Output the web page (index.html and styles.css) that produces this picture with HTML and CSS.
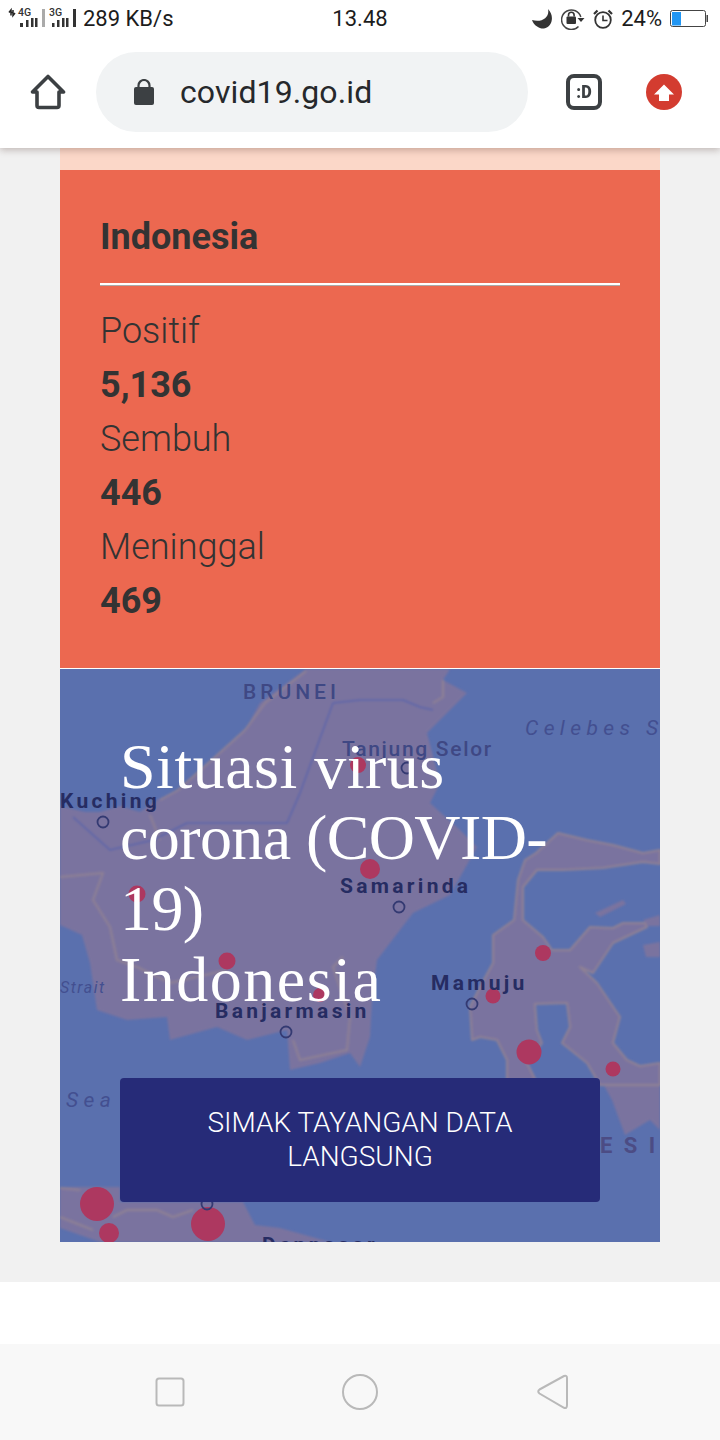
FILE: index.html
```html
<!DOCTYPE html>
<html lang="id">
<head>
<meta charset="utf-8">
<title>covid19.go.id</title>
<link rel="stylesheet" href="styles.css">
</head>
<body>
<div class="phone">
  <header class="chrome">
    <div class="status">
      <div class="status-left">
        <svg width="76" height="36" viewBox="0 1 76 36">
          <path d="M9 12.500L11 10V15.500M10.500 12.500H13M13 10V15.500L15 13" stroke="#222" stroke-width="1.500" fill="none"/>
          <text x="18" y="16" class="net">4G</text>
          <path d="M20 23h3v4h-3zM26 20h2.500v7H26zM31 18h2.500v9H31zM35 18h2.500v9H35z" fill="#333"/>
          <rect x="42" y="9" width="3" height="18" fill="#aaa"/>
          <text x="49" y="16" class="net">3G</text>
          <path d="M52 23h2.500v4H52zM57 20h2.500v7H57zM62 18h2.500v9H62zM66 18h2.500v9H66zM73 9h3v18h-3z" fill="#333"/>
        </svg>
        <span class="status-text">289 KB/s</span>
      </div>
      <span class="status-text">13.48</span>
      <div class="status-right">
        <svg width="21" height="20" viewBox="0 0 21 20"><path d="M16 0C18 8 10 14 0 11C2 17 8 20 12 19.500C20 18.500 23 7 16 0Z" fill="#333"/></svg>
        <svg width="24" height="22" viewBox="0 0 24 22"><path d="M17.500 18.500A9.800 9.800 0 1 1 19.800 9" fill="none" stroke="#444" stroke-width="1.500"/><path d="M16.500 10h7l-3.500 4z" fill="#333"/><rect x="5.500" y="8.500" width="9.500" height="7.500" rx="1" fill="#333"/><path d="M7.500 8.500V7a2.800 2.800 0 0 1 5.600 0V8.500" fill="none" stroke="#333" stroke-width="1.600"/></svg>
        <svg width="20" height="20" viewBox="0 0 20 20"><circle cx="10" cy="11" r="7.800" fill="none" stroke="#333" stroke-width="1.800"/><path d="M10 6.500v5h4.500" fill="none" stroke="#333" stroke-width="1.600"/><path d="M1 5L4.500 1.500M19 5L15.500 1.500" stroke="#333" stroke-width="2.200"/></svg>
        <span class="status-text">24%</span>
        <svg width="38" height="20" viewBox="0 0 38 20"><rect x=".5" y="1.500" width="35" height="16" rx="2" fill="#fff" stroke="#444"/><rect x="2" y="3" width="9" height="13.500" fill="#2196f3"/><rect x="36.500" y="6" width="1.500" height="7" fill="#444"/></svg>
      </div>
    </div>
    <div class="toolbar">
      <svg width="36" height="36" viewBox="0 0 36 36"><path d="M2.500 18L18 2.500L33.500 18H29V31.500Q29 33.500 27 33.500H9Q7 33.500 7 31.500V18Z" fill="none" stroke="#3c4043" stroke-width="3.600" stroke-linejoin="round"/></svg>
      <div class="omnibox">
        <svg width="20" height="26" viewBox="0 0 20 26"><rect x="0" y="8" width="20" height="18" rx="2" fill="#3c4043"/><path d="M4.500 9V6.500a5.500 5.500 0 0 1 11 0V9" fill="none" stroke="#3c4043" stroke-width="2.200"/></svg>
        <span class="url">covid19.go.id</span>
      </div>
      <div class="tab-count"><span class="tab-glyph">:D</span></div>
      <svg width="36" height="36" viewBox="0 0 36 36"><circle cx="18" cy="18" r="18" fill="#d33c30"/><path d="M18 10.500L28 20.500H23V27H13V20.500H8Z" fill="#fff"/></svg>
    </div>
  </header>

  <main class="page">
    <div class="column">
      <div class="peach"></div>
      <section class="stats">
        <h2 class="stats-title">Indonesia</h2>
        <hr class="rule">
        <div class="label">Positif</div>
        <div class="value">5,136</div>
        <div class="label">Sembuh</div>
        <div class="value">446</div>
        <div class="label">Meninggal</div>
        <div class="value">469</div>
      </section>
      <section class="hero">
        <svg class="map" viewBox="60 669 600 573" width="600" height="573" aria-hidden="true">
          <defs><filter id="soft" x="-5%" y="-5%" width="110%" height="110%"><feGaussianBlur stdDeviation=".8"/></filter></defs>
          <rect x="60" y="669" width="600" height="573" fill="#5a70ae"/>
          <g filter="url(#soft)">
            <g class="land">
              <path d="M306 669L260 703L247 727L220 753L177 790L157 800L140 812L120 806L100 812L85 812L60 806V925L82 935L90 963L97 1010L127 1020L167 1017L170 1040L217 1027L247 1040L287 1030L290 1070L320 1063L350 1053L360 1067L370 1037L372 1000L377 960L413 913L450 895L477 847L460 830L430 803L440 783L427 733L467 693L443 680L450 669Z"/>
              <path d="M60 1187L120 1187V1202H243L255 1225L280 1228L330 1242H100L60 1228Z"/>
              <path d="M595 913L623 900L626 904L600 917Z"/>
              <path d="M643 945L660 942V957L646 957Z"/>
              <path d="M643 920L660 915V926L648 926Z"/>
              <path d="M600 1078L612 1100L625 1135L650 1120L660 1130V1075Z"/>
            </g>
            <path class="land coast" d="M558 833L587 840L613 845L643 853L660 850V864L643 862L603 868L563 870L537 870L523 887L523 920L543 937L552 950L570 950L590 927L613 928L623 923L645 923L647 927L613 943L593 973L580 967L597 983L620 1017L613 1043L627 1060L640 1066L660 1063V1085H600L587 1063L562 1043L570 1027L567 1003L535 1004L537 1030L542 1043L527 1063L538 1085H507V1060L497 1040L480 1037L472 1040L470 1007L480 987L493 963L493 935L514 920L518 880L525 860L536 853L558 833Z"/>
            <g class="road">
              <path d="M306 671L265 703L245 730L215 757L178 790L160 800"/>
              <path d="M150 815L160 840M60 877L103 873L93 900L110 927L117 960L137 967L170 983L227 970"/>
              <path d="M293 1040L300 1060L347 1050L350 1017L333 967L343 957M443 680L443 697L433 703"/>
              <path d="M60 1188L80 1190M60 1217L93 1230M113 1217L127 1210L157 1210L173 1217L193 1210"/>
            </g>
            <path class="border" d="M73 817L110 850L153 840L187 823L287 823L300 793L333 703L360 700L403 700L420 707L433 710"/>
          </g>
          <g class="pins">
            <circle cx="358" cy="765" r="8"/><circle cx="370" cy="869" r="10"/><circle cx="137" cy="894" r="8.500"/>
            <circle cx="227" cy="961" r="8.500"/><circle cx="320" cy="995" r="7"/><circle cx="543" cy="953" r="8"/>
            <circle cx="493" cy="996" r="7.500"/><circle cx="529" cy="1052" r="12.500"/><circle cx="613" cy="1069" r="7.500"/>
            <circle cx="97" cy="1204" r="17"/><circle cx="109" cy="1233" r="10"/><circle cx="208" cy="1224" r="17"/>
          </g>
          <g class="cities">
            <circle cx="103" cy="822" r="5.500"/><circle cx="399" cy="907" r="5.500"/><circle cx="286" cy="1032" r="5.500"/>
            <circle cx="472" cy="1004" r="5.500"/><circle cx="207" cy="1204" r="5.500"/><circle cx="407" cy="768" r="5.500"/>
          </g>
          <g class="map-major">
            <text x="60" y="808">Kuching</text>
            <text x="340" y="893">Samarinda</text>
            <text x="215" y="1018">Banjarmasin</text>
            <text x="431" y="990">Mamuju</text>
            <text x="262" y="1252">Denpasar</text>
          </g>
          <g class="map-minor">
            <text x="243" y="699" class="spaced">BRUNEI</text>
            <text x="342" y="756">Tanjung Selor</text>
            <text x="600" y="1153" class="spaced-wide">E S I</text>
          </g>
          <g class="map-sea">
            <text x="525" y="735" class="sea-wide">Celebes Sea</text>
            <text x="60" y="993" class="sea-small">Strait</text>
            <text x="66" y="1107" class="sea-wide">Sea</text>
          </g>
        </svg>
        <div class="hero-content">
          <h1 class="hero-title"><span class="hero-first">Situasi virus</span> <span class="hero-second">corona (COVID-19)</span><br><span class="hero-country">Indonesia</span></h1>
          <a class="cta">SIMAK TAYANGAN DATA LANGSUNG</a>
        </div>
      </section>
    </div>
  </main>

  <div class="spacer"></div>

  <nav class="navbar">
    <svg width="30" height="30" viewBox="0 0 30 30"><rect x="1.500" y="1.500" width="27" height="27" rx="2.500" fill="none" stroke="#b9b9b9" stroke-width="2"/></svg>
    <svg width="36" height="36" viewBox="0 0 36 36"><circle cx="18" cy="18" r="17" fill="none" stroke="#b9b9b9" stroke-width="2"/></svg>
    <svg width="34" height="36" viewBox="-2 0 34 36"><path d="M2.500 15.500L27 2Q30 1 30 4V31Q30 35 27 33.800L2.500 19.500Q0 17.500 2.500 15.500Z" fill="none" stroke="#b9b9b9" stroke-width="2"/></svg>
  </nav>
</div>
</body>
</html>
```
FILE: styles.css
```css
* { box-sizing: border-box; }
html, body { margin: 0; padding: 0; }
body { font-family: Roboto, "Liberation Sans", sans-serif; background: #fff; }

.phone { width: 720px; height: 1440px; display: flex; flex-direction: column; overflow: hidden; }

.chrome { position: relative; z-index: 2; height: 148px; background: #fff; box-shadow: 0 2px 7px rgba(60, 30, 20, .28); flex: none; }

.status { height: 38px; display: grid; grid-template-columns: 1fr auto 1fr; align-items: center; }
.status-left { display: flex; align-items: center; gap: 7px; }
.status-right { display: flex; align-items: center; gap: 8px; justify-content: flex-end; padding-right: 12px; }
.status-text { font-size: 22px; color: #1c1c1c; line-height: 28px; }
.net { font-family: Roboto, sans-serif; font-size: 10.500px; font-weight: 500; fill: #333; }

.toolbar { height: 110px; display: flex; align-items: center; padding: 0 38px 2px 30px; }
.omnibox { width: 432px; height: 80px; margin: 0 38px 0 30px; border-radius: 40px; background: #f1f3f4; display: flex; align-items: center; padding-left: 38px; gap: 26px; }
.url { font-size: 32px; color: #26282b; letter-spacing: .1px; }
.tab-count { width: 36px; height: 36px; margin-right: 44px; border: 4px solid #3c4043; border-radius: 8px; color: #3c4043; display: flex; align-items: center; justify-content: center; }
.tab-glyph { display: block; font-size: 19px; line-height: 24px; font-weight: 900; transform: scaleX(.85); }

.page { background: #f1f1f1; height: 1134px; flex: none; }
.column { width: 600px; margin: 0 auto; }
.peach { height: 22px; background: #fbd7c8; }

.stats { background: #ec6850; padding: 40px 40px 41px; height: 498px; color: #333; }
.stats-title { margin: 0; padding-top: 2px; font-size: 36px; line-height: 50px; font-weight: 700; }
.rule { margin: 21px 0 18px; border: 0; height: 3px; background: #fff; border-bottom: 1px solid #aaa; }
.label { font-size: 36px; line-height: 54px; font-weight: 300; }
.value { font-size: 36px; line-height: 54px; font-weight: 700; }

.hero { position: relative; height: 574px; background: #fff; padding-top: 1px; overflow: hidden; }
.map { position: absolute; left: 0; top: 1px; display: block; }
.land { fill: #7a739f; }
.coast { stroke: #8f8194; stroke-width: 2; stroke-linejoin: round; }
.road { fill: none; stroke: #8f8194; stroke-width: 2; stroke-linejoin: round; }
.border { fill: none; stroke: #6268a8; stroke-width: 2; stroke-linejoin: round; }
.pins { fill: #ad3860; }
.cities { fill: none; stroke: #343a72; stroke-width: 1.800; }
.map-major { font: 700 21px Roboto, sans-serif; fill: #262c62; letter-spacing: 3.300px; }
.map-minor { font: 500 21px Roboto, sans-serif; fill: #3f4884; letter-spacing: 1.700px; }
.map-sea { font: italic 400 21px Roboto, sans-serif; fill: #434f90; letter-spacing: 3px; }
.spaced { letter-spacing: 4px; }
.spaced-wide { letter-spacing: 3px; font-size: 22px; font-weight: 700; fill: #4c4c84; }
.sea-wide { letter-spacing: 5.400px; }
.sea-small { font-size: 16px; letter-spacing: 1.500px; }

.hero-content { position: relative; padding: 62px 60px 40px; }
.hero-title { margin: 0 0 63px; font-family: "Liberation Serif", "Times New Roman", serif; font-size: 64px; line-height: 71px; font-weight: 400; color: #fff; }
.hero-first { letter-spacing: .5px; }
.hero-second { letter-spacing: -.6px; }
.hero-country { letter-spacing: 1.500px; }
.cta { display: block; padding: 28px 40px; background: #262b78; border-radius: 4px; color: #fff; font-size: 28px; line-height: 34px; font-weight: 300; text-align: center; }

.spacer { flex: 1; background: #fff; }
.navbar { height: 96px; flex: none; background: #f8f8f8; display: flex; align-items: center; padding: 0 151px 0 155px; justify-content: space-between; }
```
